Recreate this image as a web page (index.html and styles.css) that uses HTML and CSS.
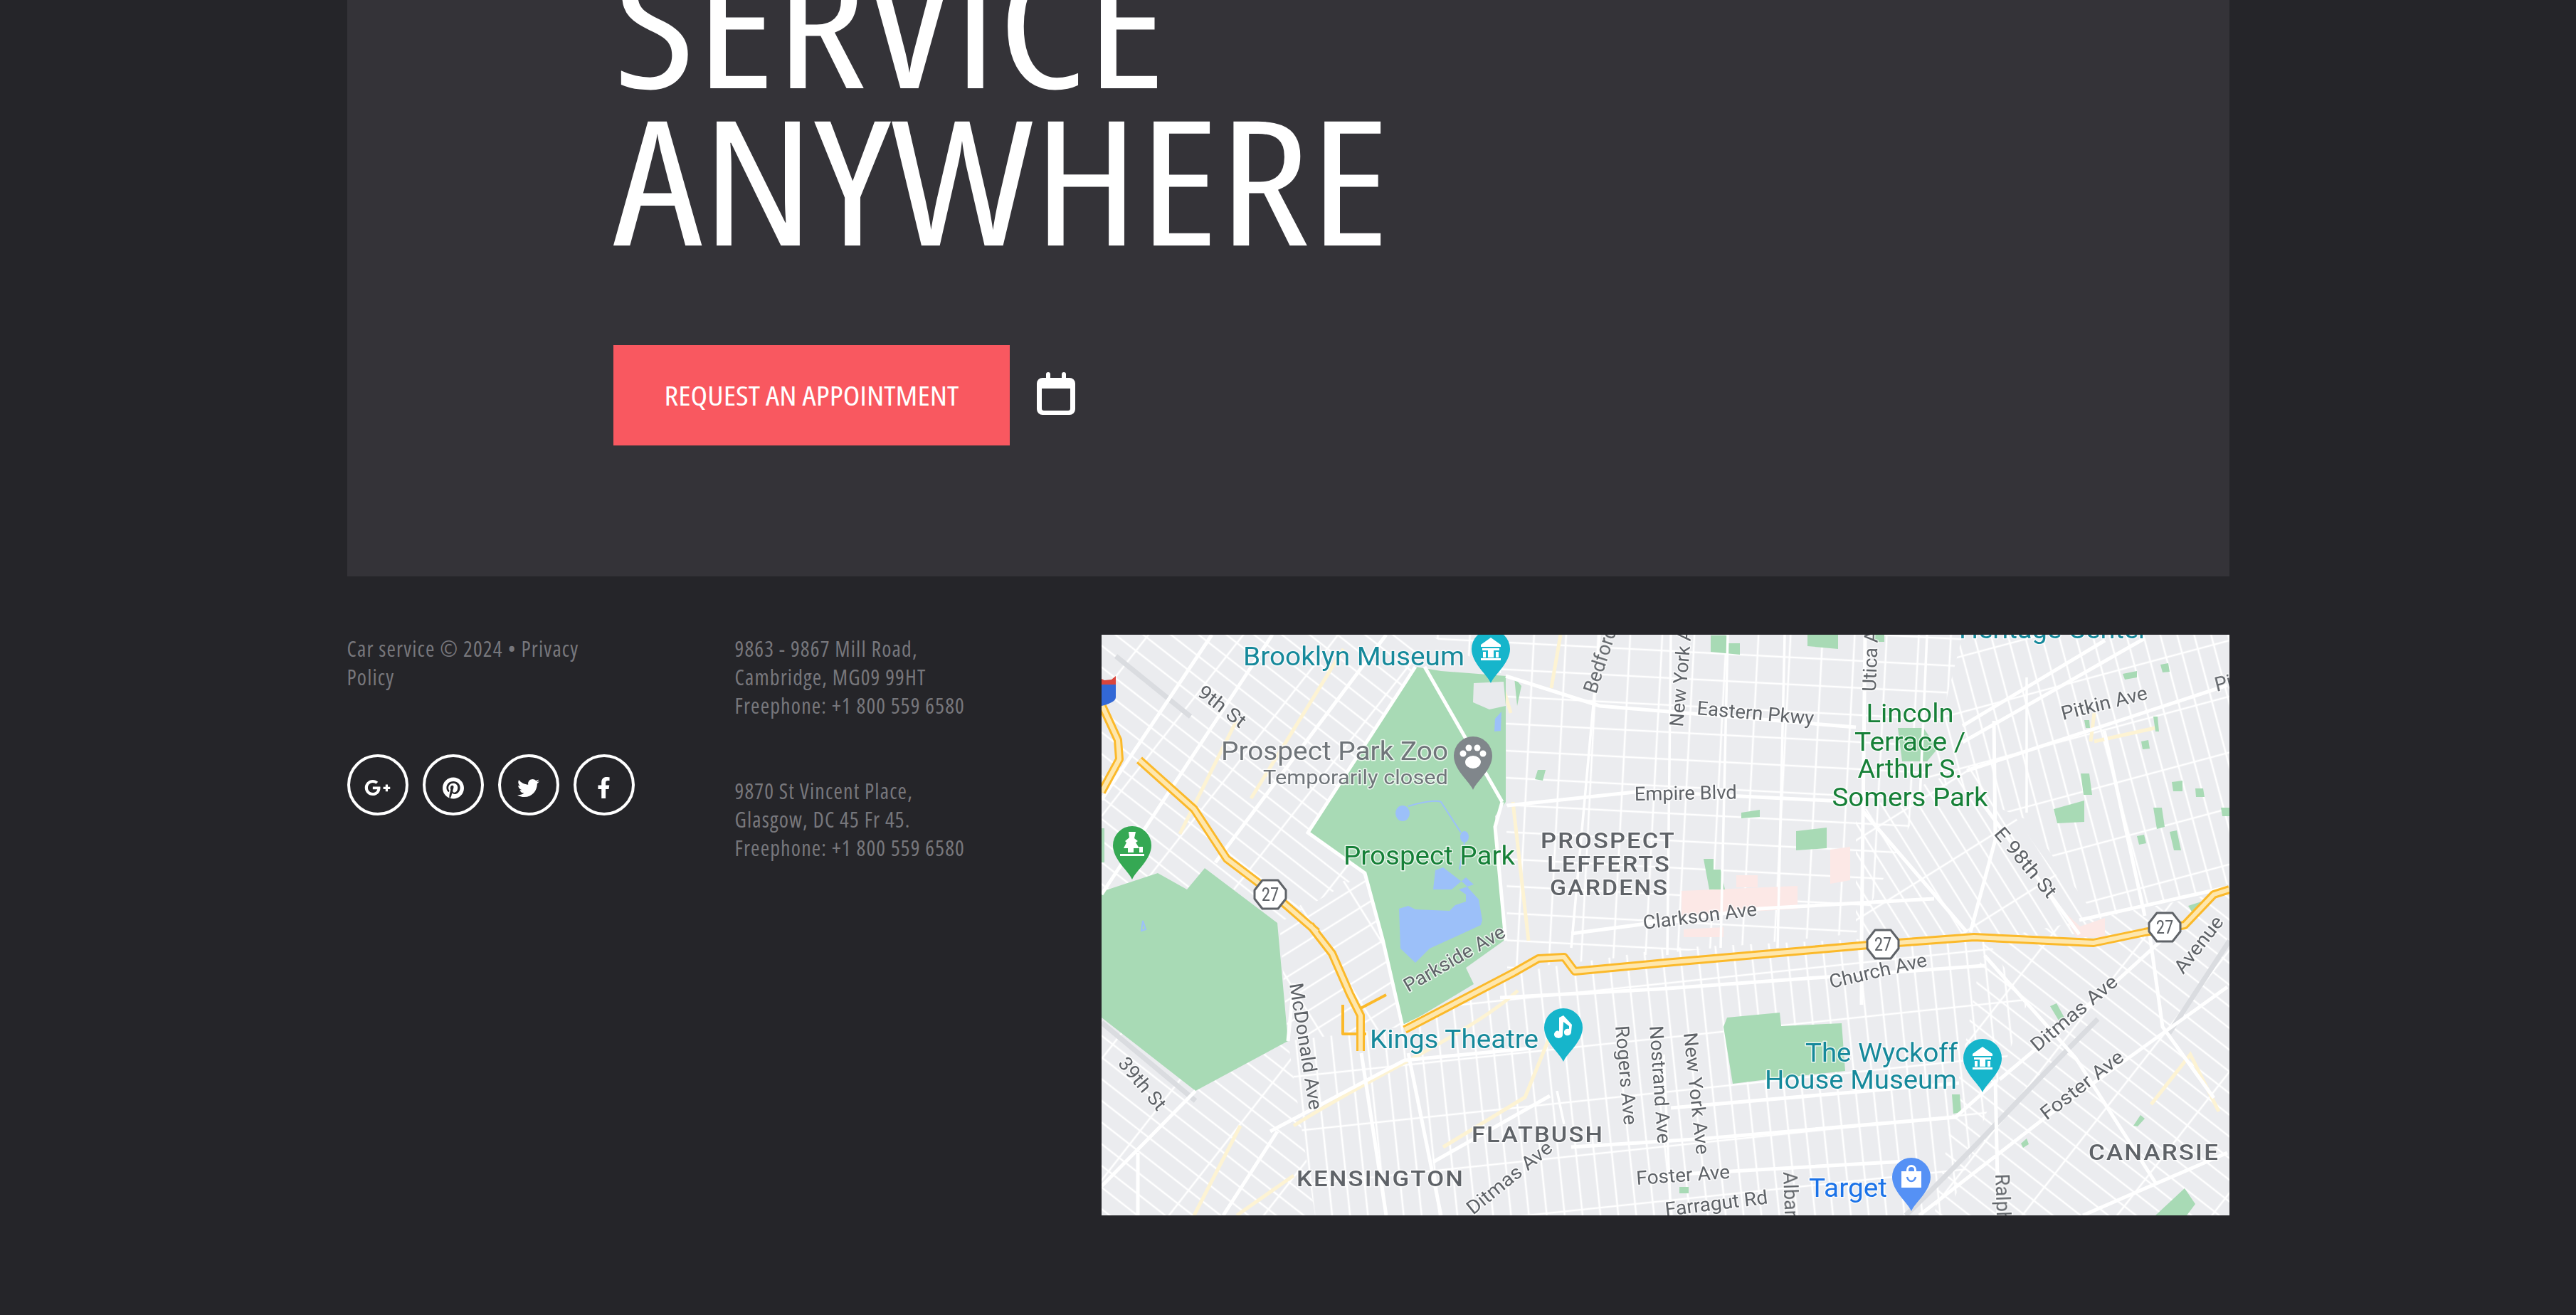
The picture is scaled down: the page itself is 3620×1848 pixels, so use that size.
FILE: index.html
```html
<!DOCTYPE html>
<html lang="en">
<head>
<meta charset="utf-8">
<title>Car service</title>
<link rel="stylesheet" href="styles.css">
</head>
<body>
<div class="page">
  <section class="hero">
    <h1 class="hero-title"><span class="wide">SERVICE<br>ANYWHERE</span></h1>
    <div class="cta-row">
      <a class="cta" href="#"><span class="cta-label">REQUEST AN APPOINTMENT</span></a>
      <svg class="calendar" viewBox="0 0 54 66"><path fill-rule="evenodd" d="M13 3a3 3 0 0 1 6 0v5h16V3a3 3 0 0 1 6 0v5h5a8 8 0 0 1 8 8v36a8 8 0 0 1-8 8H8a8 8 0 0 1-8-8V16a8 8 0 0 1 8-8h5zM7 23v28a3 3 0 0 0 3 3h34a3 3 0 0 0 3-3V23z"/></svg>
    </div>
  </section>
  <footer class="footer">
    <div class="col-left">
      <p class="copy">Car service © 2024 • Privacy Policy</p>
      <div class="social">
        <a class="soc" href="#"><svg class="i-g" viewBox="0 0 640 512"><path d="M386.061 228.496c1.834 9.692 3.143 19.384 3.143 31.956C389.204 370.205 315.599 448 204.8 448c-106.084 0-192-85.915-192-192s85.916-192 192-192c51.864 0 95.083 18.859 128.611 50.292l-52.126 50.03c-14.145-13.621-39.028-29.599-76.485-29.599-65.484 0-118.92 54.221-118.92 121.277 0 67.056 53.436 121.277 118.92 121.277 75.961 0 104.513-54.745 108.965-82.773H204.8v-66.009h181.261zm185.406 6.437V179.2h-56.001v55.733h-55.733v56.001h55.733v55.733h56.001v-55.733H627.2v-56.001h-55.733z"/></svg></a>
        <a class="soc" href="#"><svg class="i-p" viewBox="0 0 496 512"><path d="M496 256c0 137-111 248-248 248-25.6 0-50.2-3.9-73.4-11.1 10.1-16.5 25.2-43.5 30.8-65 3-11.6 15.4-59 15.4-59 8.1 15.4 31.7 28.5 56.8 28.5 74.8 0 128.7-68.8 128.7-154.3 0-81.9-66.9-143.2-152.9-143.2-107 0-163.9 71.8-163.9 150.1 0 36.4 19.4 81.7 50.3 96.1 4.7 2.2 7.2 1.2 8.3-3.3.8-3.4 5-20.3 6.9-28.1.6-2.5.3-4.7-1.7-7.1-10.1-12.5-18.3-35.3-18.3-56.6 0-54.7 41.4-107.6 112-107.6 60.9 0 103.6 41.5 103.6 100.9 0 67.1-33.9 113.6-78 113.6-24.3 0-42.6-20.1-36.7-44.8 7-29.5 20.5-61.3 20.5-82.6 0-19-10.2-34.9-31.4-34.9-24.9 0-44.9 25.7-44.9 60.2 0 22 7.4 36.8 7.4 36.8s-24.5 103.8-29 123.2c-5 21.4-3 51.6-.9 71.2C65.4 450.9 0 361.1 0 256 0 119 111 8 248 8s248 111 248 248z"/></svg></a>
        <a class="soc" href="#"><svg class="i-t" viewBox="0 0 512 512"><path d="M459.37 151.716c.325 4.548.325 9.097.325 13.645 0 138.72-105.583 298.558-298.558 298.558-59.452 0-114.68-17.219-161.137-47.106 8.447.974 16.568 1.299 25.34 1.299 49.055 0 94.213-16.568 130.274-44.832-46.132-.975-84.792-31.188-98.112-72.772 6.498.974 12.995 1.624 19.818 1.624 9.421 0 18.843-1.3 27.614-3.573-48.081-9.747-84.143-51.98-84.143-102.985v-1.299c13.969 7.797 30.214 12.67 47.431 13.319-28.264-18.843-46.781-51.005-46.781-87.391 0-19.492 5.197-37.36 14.294-52.954 51.655 63.675 129.3 105.258 216.365 109.807-1.624-7.797-2.599-15.918-2.599-24.04 0-57.828 46.782-104.934 104.934-104.934 30.213 0 57.502 12.67 76.67 33.137 23.715-4.548 46.456-13.32 66.599-25.34-7.798 24.366-24.366 44.833-46.132 57.827 21.117-2.273 41.584-8.122 60.426-16.243-14.292 20.791-32.161 39.308-52.628 54.253z"/></svg></a>
        <a class="soc" href="#"><svg class="i-f" viewBox="0 0 320 512"><path d="M279.14 288l14.22-92.66h-88.91v-60.13c0-25.35 12.42-50.06 52.24-50.06h40.42V6.26S260.43 0 225.36 0c-73.22 0-121.08 44.38-121.08 124.72v70.62H22.89V288h81.39v224h100.17V288z"/></svg></a>
      </div>
    </div>
    <div class="col-addr">
      <p class="addr">9863 - 9867 Mill Road,<br>Cambridge, MG09 99HT<br>Freephone: +1 800 559 6580</p>
      <p class="addr">9870 St Vincent Place,<br>Glasgow, DC 45 Fr 45.<br>Freephone: +1 800 559 6580</p>
    </div>
    <div class="map">
      <svg class="map-svg" viewBox="0 0 1585 816" width="1585" height="816">
        <defs>
          <pattern id="pA" width="105" height="24" patternUnits="userSpaceOnUse" patternTransform="rotate(38)"><path class="st" d="M0 12H105M52 0V24"/></pattern>
          <pattern id="pB" width="45" height="38" patternUnits="userSpaceOnUse" patternTransform="rotate(3)"><path class="st" d="M0 19H45M22 0V38"/></pattern>
          <pattern id="pC" width="25" height="76" patternUnits="userSpaceOnUse" patternTransform="rotate(-6)"><path class="st" d="M0 38H25M12 0V76"/></pattern>
          <pattern id="pD" width="23" height="76" patternUnits="userSpaceOnUse" patternTransform="rotate(-15)"><path class="st" d="M0 38H23M11 0V76"/></pattern>
          <pattern id="pF" width="95" height="22" patternUnits="userSpaceOnUse" patternTransform="rotate(58)"><path class="st" d="M0 11H95M47 0V22"/></pattern>
          <pattern id="pG" width="70" height="28" patternUnits="userSpaceOnUse" patternTransform="rotate(-32)"><path class="st" d="M0 14H70M35 0V28"/></pattern>
          <path id="pin" d="M0 48C-5 36-27 20-27 0A27 27 0 0 1 27 0C27 20 5 36 0 48Z"/>
          <filter id="soft" x="0" y="0" width="100%" height="100%"><feGaussianBlur stdDeviation="0.7"/></filter>
        </defs>
        <g filter="url(#soft)">
          <rect class="land" width="1585" height="816"/>
          <!-- street grids -->
          <polygon fill="url(#pA)" points="0,0 441,0 441,45 290,278 370,335 250,405 145,328 120,358 79,335 0,361"/>
          <polygon fill="url(#pG)" points="250,405 303,360 370,335 395,430 423,551 262,571"/>
          <polygon fill="url(#pA)" points="0,538 132,641 262,571 300,816 0,816"/>
          <polygon fill="url(#pC)" points="262,571 423,551 579,475 800,440 1240,420 1300,520 1190,816 300,816"/>
          <polygon fill="url(#pB)" points="460,0 1210,0 1150,240 1060,420 570,470 568,58"/>
          <polygon fill="url(#pD)" points="1210,0 1585,0 1585,350 1400,400 1300,260 1160,200"/>
          <polygon fill="url(#pF)" points="1060,250 1230,180 1400,420 1060,430"/>
          <polygon fill="url(#pA)" points="1240,430 1585,360 1585,816 1170,816"/>
          <!-- pink areas -->
          <path class="pink" d="M815 360L978 353V385L815 395ZM1024 302L1052 298V345L1024 350ZM892 338H922V355H892ZM818 414L874 411V425H818ZM1348 385L1375 410L1410 398V425H1370Z"/>
          <!-- rail and grey corridors -->
          <path class="rail" d="M20 30L125 115M0 545L132 655M1130 816C1210 740 1300 640 1400 540M1500 560L1585 430"/>
          <!-- pale arterials -->
          <path class="pale" d="M578 235L600 430M645 0L632 75M560 60L575 110M190 120L110 280M340 20L210 230M585 500C520 560 380 620 270 690M270 760L190 816M195 690L130 816M640 540L595 650L480 720M1485 130L1395 150M1395 110L1390 150M1475 660L1530 590L1570 670"/>
          <!-- parks -->
          <path class="park" d="M441 45L290 278L370 335L395 428L423 551L523 491L512 468L568 428L553 255L568 235V58L477 51Z"/>
          <path class="park" d="M0 361L79 335L120 358L145 328L247 405L262 571L132 641L0 538Z"/>
          <path class="park" d="M879 538L953 531L955 550L1040 546L1045 613L935 625L887 631L874 551Z"/>
          <path class="park" d="M1119 131H1155L1175 160L1160 178H1125Z"/>
          <path class="park" d="M0 272H4V320H0ZM856 1H880V12H897V28L856 24ZM992 0H1035V20L992 16ZM899 250L925 246V256L899 258ZM976 276L1019 271V300L976 303ZM846 315H860V330H870L876 358H854ZM1338 245L1381 233V263L1343 265ZM1376 195H1388L1392 225H1380ZM1504 207L1519 205V220H1506ZM1537 216H1548L1550 228H1538ZM1478 243H1490L1494 270L1483 273ZM1501 277L1511 275L1517 303H1507ZM1455 283L1465 281L1468 293L1458 295ZM1435 55L1455 51V60L1438 63ZM1488 42L1499 40L1501 52L1491 53ZM1478 115H1484L1486 136H1481ZM1461 150L1471 148L1473 160L1463 161ZM1381 120L1388 120L1389 131H1383ZM1573 243H1585V255H1575ZM1527 381L1558 371V376L1535 394ZM1333 522L1342 518L1353 538L1345 542ZM1450 690L1460 675L1466 680L1456 691ZM1292 715L1300 708L1303 716L1295 721ZM1481 816L1522 778L1537 800L1525 816ZM1195 646H1206L1208 671L1197 673ZM812 776H825V785H812ZM535 70L568 60V64L560 70ZM580 60L590 72L584 100ZM613 190H624L620 205L609 203ZM1082 0H1100V10H1088Z"/>
          <path class="greyblock" d="M523 68L565 66L568 100L545 105L522 95Z"/>
          <!-- water -->
          <path class="water" d="M418 385L431 381L441 386L489 388L497 380L512 375V365L502 358L523 351L512 341L492 358L466 358L469 331L480 327L497 340L510 350L530 372L535 401L533 408L461 441L441 461L420 441Z"/>
          <ellipse class="water" cx="423" cy="251" rx="10" ry="11"/>
          <ellipse class="water" cx="510" cy="284" rx="6" ry="8"/>
          <path class="water" d="M553 118L562 108L561 135L552 136Z"/>
          <path class="stream" d="M431 241C450 235 470 232 477 235L505 278M510 292L503 330M58 402L62 414L56 416Z"/>
          <!-- major roads -->
          <path class="road" d="M155 0L0 232M240 0L0 365M400 0L160 320M454 45L563 235M441 45L290 278L370 335L395 428L423 551M563 235L553 270L568 430M568 58L700 100L1060 130M570 240L760 220L1060 235M660 420L925 385L1170 371M1374 401L1582 355M1070 248L1216 418M1226 221L1374 421M1210 128L1410 8M1210 151L1466 5M1216 191L1582 71M1254 121L1256 288L1221 418M1073 0L1068 430V520M1409 135L1466 395M132 641L0 775M51 728V816M270 490L262 571M423 551L580 475M237 698L426 598L604 581M171 816L247 698M466 741L630 648M365 588L400 816M431 588L477 816M560 510L782 498L1241 465M660 720L848 708L1200 678L1256 628M800 665L1205 630M780 760L1130 740M1262 625L1425 488L1500 420M1149 816L1323 681L1582 495M1379 816L1582 728M1241 451L1369 595L1481 770M1256 625L1260 816M1471 408L1491 551L1563 651"/>
          <path class="road-thin" d="M700 0L660 440M800 0L795 450M880 0L870 440M960 0L950 440M1160 0L1150 230M1300 250L1300 60M640 641L650 688M800 816L790 590"/>
          <!-- highway 27 -->
          <path class="hw-thin" d="M339 520L339 561H372M364 525L400 506"/>
          <path class="hw-edge" d="M0 98L23 148L25 175L0 221M53 176L130 245L176 315L242 365L303 418M293 408L324 448L349 505L364 535L364 585M426 555L579 475L614 455L650 453L665 473L792 461L1078 436L1226 425L1394 433L1466 418L1522 408L1563 365L1585 358"/>
          <path class="hw-fill" d="M0 98L23 148L25 175L0 221M53 176L130 245L176 315L242 365L303 418M293 408L324 448L349 505L364 535L364 585M426 555L579 475L614 455L650 453L665 473L792 461L1078 436L1226 425L1394 433L1466 418L1522 408L1563 365L1585 358"/>
          <!-- interstate shield -->
          <path class="shield-b" d="M0 70H20V88C20 94 8 98 0 100Z"/>
          <path class="shield-r" d="M0 62L4 64L14 63L20 58V70H0Z"/>
          <!-- labels -->
          <text class="lb teal" x="199" y="43" textLength="311" lengthAdjust="spacingAndGlyphs">Brooklyn Museum</text>
          <text class="lb teal" x="1205" y="5" textLength="265" lengthAdjust="spacingAndGlyphs">Heritage Center</text>
          <text class="lb grey" x="168" y="176" textLength="319" lengthAdjust="spacingAndGlyphs">Prospect Park Zoo</text>
          <text class="lb sm grey" x="227" y="210" textLength="260" lengthAdjust="spacingAndGlyphs">Temporarily closed</text>
          <text class="lb green" x="340" y="323" textLength="241" lengthAdjust="spacingAndGlyphs">Prospect Park</text>
          <text class="lb green mid" x="1136" y="123" textLength="123" lengthAdjust="spacingAndGlyphs">Lincoln</text>
          <text class="lb green mid" x="1136" y="163" textLength="156" lengthAdjust="spacingAndGlyphs">Terrace /</text>
          <text class="lb green mid" x="1136" y="201" textLength="147" lengthAdjust="spacingAndGlyphs">Arthur S.</text>
          <text class="lb green mid" x="1136" y="241" textLength="219" lengthAdjust="spacingAndGlyphs">Somers Park</text>
          <text class="lb teal" x="377" y="581" textLength="237" lengthAdjust="spacingAndGlyphs">Kings Theatre</text>
          <text class="lb teal" x="989" y="600" textLength="214" lengthAdjust="spacingAndGlyphs">The Wyckoff</text>
          <text class="lb teal" x="932" y="638" textLength="270" lengthAdjust="spacingAndGlyphs">House Museum</text>
          <text class="lb blue" x="994" y="790" textLength="110" lengthAdjust="spacingAndGlyphs">Target</text>
          <text class="lb hood" x="617" y="300" textLength="190" lengthAdjust="spacingAndGlyphs">PROSPECT</text>
          <text class="lb hood" x="626" y="333" textLength="174" lengthAdjust="spacingAndGlyphs">LEFFERTS</text>
          <text class="lb hood" x="630" y="366" textLength="167" lengthAdjust="spacingAndGlyphs">GARDENS</text>
          <text class="lb hood" x="520" y="713" textLength="186" lengthAdjust="spacingAndGlyphs">FLATBUSH</text>
          <text class="lb hood" x="274" y="775" textLength="236" lengthAdjust="spacingAndGlyphs">KENSINGTON</text>
          <text class="lb hood" x="1387" y="738" textLength="184" lengthAdjust="spacingAndGlyphs">CANARSIE</text>
          <text class="lb st-l" transform="translate(133 84) rotate(38)" textLength="78" lengthAdjust="spacingAndGlyphs">9th St</text>
          <text class="lb st-l" transform="translate(695 84) rotate(-72)">Bedford Ave</text>
          <text class="lb st-l" transform="translate(749 233) rotate(-1)" textLength="144" lengthAdjust="spacingAndGlyphs">Empire Blvd</text>
          <text class="lb st-l" transform="translate(762 414) rotate(-7)" textLength="161" lengthAdjust="spacingAndGlyphs">Clarkson Ave</text>
          <text class="lb st-l" transform="translate(817 130) rotate(-85)">New York Ave</text>
          <text class="lb st-l" transform="translate(1088 80) rotate(-88)">Utica Ave</text>
          <text class="lb st-l" transform="translate(836 112) rotate(5)" textLength="165" lengthAdjust="spacingAndGlyphs">Eastern Pkwy</text>
          <text class="lb st-l" transform="translate(1351 120) rotate(-14)" textLength="124" lengthAdjust="spacingAndGlyphs">Pitkin Ave</text>
          <text class="lb st-l" transform="translate(1567 80) rotate(-14)">Pitkin Ave</text>
          <text class="lb st-l" transform="translate(1253 280) rotate(50)" textLength="120" lengthAdjust="spacingAndGlyphs">E 98th St</text>
          <text class="lb st-l" transform="translate(431 503) rotate(-30)" textLength="160" lengthAdjust="spacingAndGlyphs">Parkside Ave</text>
          <text class="lb st-l" transform="translate(264 491) rotate(81)" textLength="180" lengthAdjust="spacingAndGlyphs">McDonald Ave</text>
          <text class="lb st-l" transform="translate(22 603) rotate(50)" textLength="88" lengthAdjust="spacingAndGlyphs">39th St</text>
          <text class="lb st-l" transform="translate(722 550) rotate(85)" textLength="140" lengthAdjust="spacingAndGlyphs">Rogers Ave</text>
          <text class="lb st-l" transform="translate(770 550) rotate(86)" textLength="166" lengthAdjust="spacingAndGlyphs">Nostrand Ave</text>
          <text class="lb st-l" transform="translate(522 816) rotate(-39)" textLength="146" lengthAdjust="spacingAndGlyphs">Ditmas Ave</text>
          <text class="lb st-l" transform="translate(752 773) rotate(-4)" textLength="132" lengthAdjust="spacingAndGlyphs">Foster Ave</text>
          <text class="lb st-l" transform="translate(1025 497) rotate(-13)" textLength="140" lengthAdjust="spacingAndGlyphs">Church Ave</text>
          <text class="lb st-l" transform="translate(818 560) rotate(84)" textLength="172" lengthAdjust="spacingAndGlyphs">New York Ave</text>
          <text class="lb st-l" transform="translate(793 817) rotate(-7)" textLength="145" lengthAdjust="spacingAndGlyphs">Farragut Rd</text>
          <text class="lb st-l" transform="translate(958 755) rotate(88)">Albany Ave</text>
          <text class="lb st-l" transform="translate(1256 758) rotate(88)">Ralph Ave</text>
          <text class="lb st-l" transform="translate(1315 587) rotate(-40)" textLength="150" lengthAdjust="spacingAndGlyphs">Ditmas Ave</text>
          <text class="lb st-l" transform="translate(1520 478) rotate(-52)" textLength="94" lengthAdjust="spacingAndGlyphs">Avenue</text>
          <text class="lb st-l" transform="translate(1328 683) rotate(-38)" textLength="140" lengthAdjust="spacingAndGlyphs">Foster Ave</text>
          <!-- route 27 shields -->
          <g transform="translate(237 365)"><path class="rt" d="M-11 -20H11L22 -6V6L11 20H-11L-22 6V-6Z"/><text class="rt-t" y="9">27</text></g>
          <g transform="translate(1098 435)"><path class="rt" d="M-11 -20H11L22 -6V6L11 20H-11L-22 6V-6Z"/><text class="rt-t" y="9">27</text></g>
          <g transform="translate(1494 411)"><path class="rt" d="M-11 -20H11L22 -6V6L11 20H-11L-22 6V-6Z"/><text class="rt-t" y="9">27</text></g>
          <!-- pins -->
          <g transform="translate(547 20)"><use href="#pin" class="pin-teal"/><path class="pin-i" d="M0-16L14-6V-3H-14V-6ZM-12-1H12V2H-12ZM-11 4H-7V12H-11ZM7 4H11V12H7ZM-4 2H4V12H-4ZM-14 13H14V16H-14Z"/></g>
          <g transform="translate(1238 595)"><use href="#pin" class="pin-teal"/><path class="pin-i" d="M0-16L14-6V-3H-14V-6ZM-12-1H12V2H-12ZM-11 4H-7V12H-11ZM7 4H11V12H7ZM-4 2H4V12H-4ZM-14 13H14V16H-14Z"/></g>
          <g transform="translate(522 170)"><use href="#pin" class="pin-grey"/><ellipse class="pin-i" cx="0" cy="9" rx="11" ry="9"/><circle class="pin-i" cx="-14" cy="-3" r="4.5"/><circle class="pin-i" cx="14" cy="-3" r="4.5"/><circle class="pin-i" cx="-6" cy="-11" r="4.5"/><circle class="pin-i" cx="6" cy="-11" r="4.5"/></g>
          <g transform="translate(43 296)"><use href="#pin" class="pin-green"/><path class="pin-i" d="M-5-19L5-19L3-10L8-6L5-4L10 4H2V10H-6V4H-12L-8-4L-10-6L-4-11ZM10 2H15V10H10ZM-17 12H17V15H-17Z"/></g>
          <g transform="translate(649 552)"><use href="#pin" class="pin-teal"/><path class="pin-i" d="M-6-14L0-17L12-4L11 6C11 13 0 13 1 6C1 2 6 1 8 2V-2L0-8L-1 10C-1 17-13 16-13 10C-13 5-7 3-6 6Z"/></g>
          <g transform="translate(1138 762)"><use href="#pin" class="pin-blue"/><path class="pin-i" fill-rule="evenodd" d="M-14-8H-7V-10A7 7 0 0 1 7-10V-8H14V15H-14ZM-4-8H4V-10A4 4 0 0 0-4-10Z"/><path class="pin-smile" d="M-6 0C-4 8 4 8 6 0"/></g>
        </g>
      </svg>
    </div>
  </footer>
</div>
</body>
</html>
```
FILE: styles.css
```css
* { box-sizing: border-box; }
html, body { margin: 0; padding: 0; }
body {
  background: #252529;
  font-family: "Open Sans", "Liberation Sans", sans-serif;
  font-stretch: 75%;
}
.page {
  width: 2645px;
  height: 1848px;
  margin: 0 auto;
  overflow: hidden;
}
.hero {
  height: 810px;
  background: #343338;
  padding: 0 0 184px 374px;
  display: flex;
  flex-direction: column;
  justify-content: flex-end;
  overflow: hidden;
}
.hero-title {
  margin: 0 0 124px;
  font-size: 244px;
  line-height: 221px;
  font-weight: 400;
  color: #fff;
}
.wide {
  display: inline-block;
  transform: scaleX(1.152);
  transform-origin: left center;
}
.cta-row {
  display: flex;
  align-items: center;
  gap: 38px;
}
.cta {
  display: block;
  width: 557px;
  height: 141px;
  line-height: 141px;
  text-align: center;
  background: #f95860;
  color: #fff;
  font-size: 38px;
  text-decoration: none;
}
.cta-label {
  display: inline-block;
  transform: scaleX(1.14);
}
.calendar { width: 54px; height: 66px; fill: #fff; }
.footer {
  display: flex;
  padding-top: 82px;
}
.col-left { flex: 0 0 545px; }
.col-addr { flex: 0 0 515px; }
.copy, .addr {
  margin: 0;
  color: #77777c;
  font-size: 30px;
  line-height: 40px;
  letter-spacing: 1.15px;
}
.copy { width: 350px; }
.addr + .addr { margin-top: 80px; }
.social {
  display: flex;
  gap: 20px;
  margin-top: 88px;
}
.soc {
  width: 86px;
  height: 86px;
  border: 4px solid #fff;
  border-radius: 50%;
  display: flex;
  align-items: center;
  justify-content: center;
  padding-top: 8px;
}
.soc svg { fill: #fff; display: block; }
.i-g { width: 37px; height: 30px; }
.i-p { width: 30px; height: 31px; }
.i-t { width: 31px; height: 31px; }
.i-f { width: 19px; height: 30px; }
.map { flex: 1; height: 816px; overflow: hidden; }
.map-svg { display: block; }
.land { fill: #ebecef; }
.st { stroke: #fff; stroke-width: 2.6; fill: none; }
.pink { fill: #fce8e6; }
.rail { stroke: #dadce0; stroke-width: 7; fill: none; }
.pale { stroke: #fdf3d3; stroke-width: 5; fill: none; }
.park { fill: #a8dab5; }
.greyblock { fill: #e8eaed; }
.water { fill: #9cc0f9; }
.stream { stroke: #9cc0f9; stroke-width: 2; fill: none; }
.road { stroke: #fff; stroke-width: 5; fill: none; }
.road-thin { stroke: #fff; stroke-width: 3.5; fill: none; }
.hw-thin { stroke: #fbb92a; stroke-width: 4; fill: none; stroke-linejoin: round; }
.hw-edge { stroke: #fbb92a; stroke-width: 12; fill: none; stroke-linejoin: round; }
.hw-fill { stroke: #fee7ad; stroke-width: 6; fill: none; stroke-linejoin: round; }
.shield-b { fill: #3367d6; }
.shield-r { fill: #d9453c; }
.lb {
  font-family: Roboto, "Liberation Sans", sans-serif;
  font-size: 36px;
  font-stretch: normal;
  stroke: #fff;
  stroke-width: 3px;
  stroke-opacity: .75;
  paint-order: stroke;
  stroke-linejoin: round;
}
.mid { text-anchor: middle; }
.sm { font-size: 28px; }
.teal { fill: #15899b; }
.green { fill: #188038; }
.grey { fill: #70757a; }
.blue { fill: #1a73e8; }
.hood { font-size: 32px; font-weight: 500; fill: #5f6368; letter-spacing: 2px; }
.st-l { font-size: 27px; fill: #5f6368; }
.rt { fill: #fff; stroke: #5f6368; stroke-width: 3; stroke-linejoin: round; }
.rt-t { font-family: Roboto, sans-serif; font-size: 25px; fill: #5f6368; text-anchor: middle; }
.pin-teal { fill: #12b5cb; }
.pin-grey { fill: #80868b; }
.pin-green { fill: #34a853; }
.pin-blue { fill: #5491f5; }
.pin-i { fill: #fff; }
.pin-smile { fill: none; stroke: #5491f5; stroke-width: 2.5; }
```
